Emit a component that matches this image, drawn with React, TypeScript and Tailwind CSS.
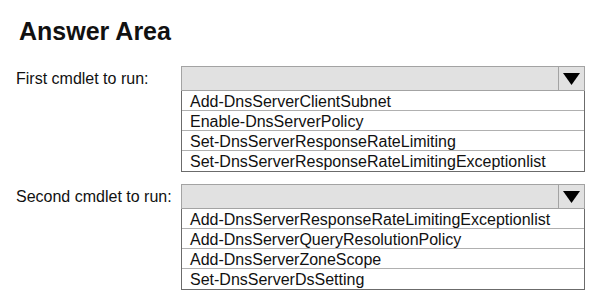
const groups = [
  {
    label: "First cmdlet to run:",
    options: [
      "Add-DnsServerClientSubnet",
      "Enable-DnsServerPolicy",
      "Set-DnsServerResponseRateLimiting",
      "Set-DnsServerResponseRateLimitingExceptionlist",
    ],
  },
  {
    label: "Second cmdlet to run:",
    options: [
      "Add-DnsServerResponseRateLimitingExceptionlist",
      "Add-DnsServerQueryResolutionPolicy",
      "Add-DnsServerZoneScope",
      "Set-DnsServerDsSetting",
    ],
  },
];

const Dropdown = ({ options }: { options: string[] }) => (
  <div className="w-[404px]">
    <div className="flex h-[25px] border border-[#a3a3a3] bg-[#e1e1e1]">
      <div className="flex-1" />
      <div className="flex w-[26px] items-center justify-center border-l border-[#a3a3a3]">
        <svg width="17" height="12" viewBox="0 0 17 12">
          <path d="M0 0 H17 L8.5 12 Z" fill="#000" />
        </svg>
      </div>
    </div>
    <div className="border-x border-b border-[#6b6b6b]">
      {options.map((opt, i) => (
        <div
          key={opt}
          className={`h-[20px] px-2 pt-px text-[16px] leading-[19px] text-[#111] ${
            i < options.length - 1 ? "border-b border-[#b0b0b0]" : ""
          }`}
        >
          {opt}
        </div>
      ))}
    </div>
  </div>
);

export default function App() {
  return (
    <div
      className="h-[300px] w-[613px] bg-white pl-4 pt-[19px]"
      style={{ fontFamily: '"Liberation Sans", Arial, sans-serif' }}
    >
      <h1 className="ml-[3px] text-[25px] font-bold leading-[25px] text-[#111]">
        Answer Area
      </h1>
      <div className="mt-[22px] flex flex-col gap-[12px]">
        {groups.map((g) => (
          <div key={g.label} className="flex">
            <div className="flex h-[25px] w-[165px] items-center text-[16px] text-[#111]">
              {g.label}
            </div>
            <Dropdown options={g.options} />
          </div>
        ))}
      </div>
    </div>
  );
}
